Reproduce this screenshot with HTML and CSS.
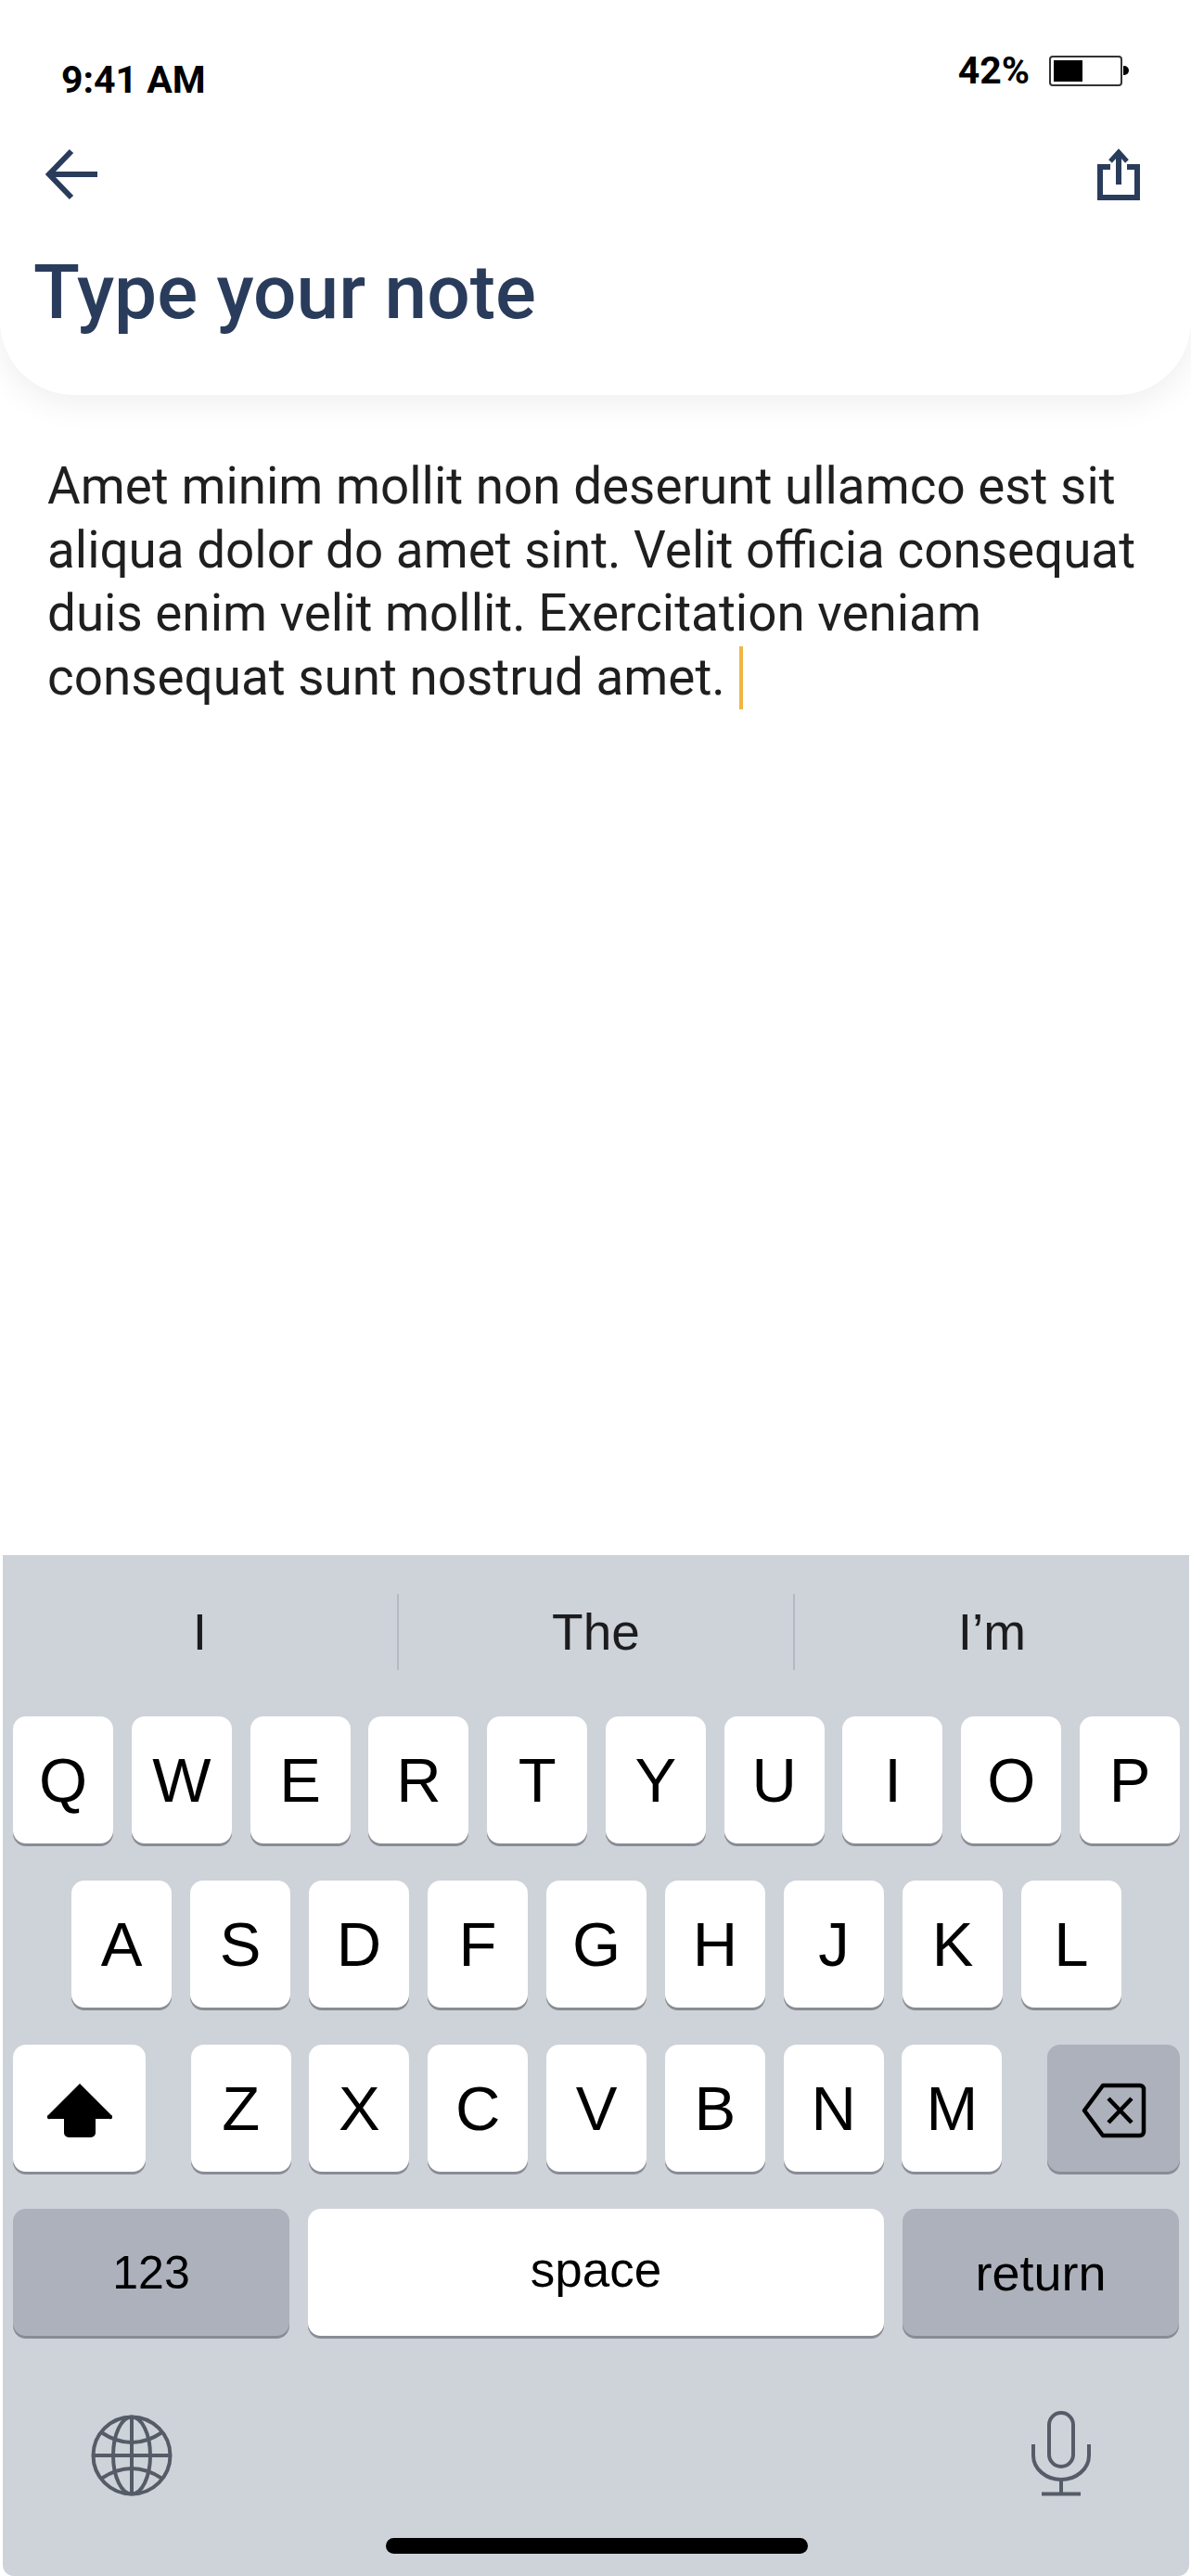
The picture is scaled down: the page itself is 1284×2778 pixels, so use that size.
FILE: index.html
```html
<!DOCTYPE html>
<html lang="en">
<head>
    <meta charset="UTF-8">
    <meta name="viewport" content="width=device-width, initial-scale=1.0">
    <title>Type your note</title>
    <link rel="stylesheet" href="styles.css">
</head>
<body>
    <div class="screen">
        <header class="top">
            <div class="status">
                <span class="time">9:41 AM</span>
                <div class="status-right">
                    <span class="percent">42%</span>
                    <div class="battery"><div class="battery-fill"></div></div>
                    <div class="battery-nub"></div>
                </div>
            </div>
            <div class="toolbar">
                <svg class="icon-back" width="58" height="56" viewBox="0 0 58 56" fill="none" stroke="#2a3c5c" stroke-width="6">
                    <path d="M56 28H5"/>
                    <path d="M28 3L4 28l24 25"/>
                </svg>
                <svg class="icon-share" width="46" height="56" viewBox="0 0 46 56" fill="none" stroke="#2a3c5c" stroke-width="6">
                    <path d="M14 20H3v33h40V20H32"/>
                    <path d="M23 39V4"/>
                    <path d="M14 14l9-10 9 10" stroke-width="5"/>
                </svg>
            </div>
            <h1 class="title">Type your note</h1>
        </header>

        <main class="note">
            <p>Amet minim mollit non deserunt ullamco est sit aliqua dolor do amet sint. Velit officia consequat duis enim velit mollit. Exercitation veniam consequat sunt nostrud amet. <span class="caret"></span></p>
        </main>

        <div class="keyboard">
            <div class="suggestions">
                <div class="suggestion">I</div>
                <div class="suggestion">The</div>
                <div class="suggestion">I’m</div>
            </div>

            <div class="key-row row-top">
                <div class="key">Q</div><div class="key">W</div><div class="key">E</div><div class="key">R</div><div class="key">T</div>
                <div class="key">Y</div><div class="key">U</div><div class="key">I</div><div class="key">O</div><div class="key">P</div>
            </div>
            <div class="key-row row-middle">
                <div class="key">A</div><div class="key">S</div><div class="key">D</div><div class="key">F</div><div class="key">G</div>
                <div class="key">H</div><div class="key">J</div><div class="key">K</div><div class="key">L</div>
            </div>
            <div class="key-row row-letters">
                <div class="key key-side key-icon">
                    <svg width="70" height="60" viewBox="0 0 70 60" fill="#000">
                        <path d="M35 1L69 35a2 2 0 0 1-2 4H52V54a5 5 0 0 1-5 5H23a5 5 0 0 1-5-5V39H3a2 2 0 0 1-2-4z"/>
                    </svg>
                </div>
                <div class="key-group">
                    <div class="key">Z</div><div class="key">X</div><div class="key">C</div><div class="key">V</div>
                    <div class="key">B</div><div class="key">N</div><div class="key">M</div>
                </div>
                <div class="key key-side key-dark key-icon">
                    <svg width="70" height="60" viewBox="0 0 70 60" fill="none" stroke="#000" stroke-width="4.5">
                        <path d="M23 3H63a4 4 0 0 1 4 4V53a4 4 0 0 1-4 4H23L3 30z" stroke-linejoin="round"/>
                        <path d="M29 17l25 26M54 17L29 43"/>
                    </svg>
                </div>
            </div>
            <div class="key-row">
                <div class="key key-wide key-dark">123</div>
                <div class="key key-space">space</div>
                <div class="key key-return key-dark">return</div>
            </div>

            <div class="kb-icons">
                <svg width="88" height="88" viewBox="0 0 88 88" fill="none" stroke="#565c67" stroke-width="4">
                    <circle cx="44" cy="44" r="41.500"/>
                    <ellipse cx="44" cy="44" rx="20" ry="41.500"/>
                    <path d="M44 2.500V85.500M2.500 44H85.500"/>
                    <path d="M11 19q33 22 66 0M11 69q33-22 66 0"/>
                </svg>
                <svg width="64" height="92" viewBox="0 0 64 92" fill="none" stroke="#565c67" stroke-width="4">
                    <rect x="19" y="2" width="26" height="58" rx="13"/>
                    <path d="M2 36V48a30 26 0 0 0 60 0V36"/>
                    <path d="M32 74V89M11 89.500H53"/>
                </svg>
            </div>
            <div class="home-bar"></div>
        </div>
    </div>
</body>
</html>
```
FILE: styles.css
```css
* {
    margin: 0;
    padding: 0;
    box-sizing: border-box;
}

body {
    font-family: Roboto, sans-serif;
    background: #fff;
}

.screen {
    width: 1284px;
    height: 2778px;
    display: flex;
    flex-direction: column;
    overflow: hidden;
}

/* top card */
.top {
    height: 426px;
    background: #fff;
    border-radius: 0 0 80px 80px;
    box-shadow: 0 8px 36px rgba(0, 0, 0, 0.07);
    padding: 0 55px 0 36px;
}

.status {
    height: 128px;
    display: flex;
    justify-content: space-between;
    align-items: flex-start;
    padding: 54px 12px 0 30px;
    color: #000;
    font-weight: 700;
    font-size: 41px;
}

.time {
    line-height: 44px;
    margin-top: 10px;
}

.status-right {
    display: flex;
    align-items: center;
}

.percent {
    line-height: 44px;
    margin-right: 21px;
}

.battery {
    width: 79px;
    height: 33px;
    border: 2px solid #333;
    border-radius: 4px;
    padding: 3px;
}

.battery-fill {
    width: 31px;
    height: 100%;
    background: #000;
}

.battery-nub {
    width: 6px;
    height: 10px;
    margin-left: 1px;
    background: #000;
    border-radius: 0 5px 5px 0;
}

.toolbar {
    height: 142px;
    display: flex;
    justify-content: space-between;
    padding-left: 13px;
    padding-top: 32px;
}

.title {
    font-size: 82px;
    font-weight: 500;
    line-height: 90px;
    color: #2a3c5c;
}

/* note text */
.note {
    flex: 1;
    padding: 64px 40px 0 51px;
    font-size: 54.8px;
    line-height: 68.5px;
    color: #1f1f1f;
}

.caret {
    display: inline-block;
    width: 4px;
    height: 68px;
    margin-left: 2px;
    background: #f2b544;
    vertical-align: -16px;
}

/* keyboard */
.keyboard {
    height: 1101px;
    width: 1279px;
    margin-left: 3px;
    background: #ced2d9;
    border-radius: 0 0 12px 12px;
    padding: 0 10px 0 11px;
    display: flex;
    flex-direction: column;
    font-family: "Liberation Sans", Arial, sans-serif;
    color: #000;
}

.suggestions {
    height: 174px;
    padding-top: 42px;
    display: flex;
    align-items: flex-start;
    margin: 0 -10px 0 -11px;
}

.suggestion {
    flex: 1;
    height: 82px;
    line-height: 82px;
    text-align: center;
    font-size: 55px;
    color: #1c1c1e;
    border-right: 2px solid #b6b9c2;
}

.suggestion:last-child {
    border-right: none;
}

.key-row {
    display: flex;
    gap: 20px;
    height: 140px;
    margin-bottom: 37px;
}

.row-top {
    gap: 19.8px;
}

.row-middle {
    padding-left: 63px;
}

.row-letters {
    justify-content: space-between;
}

.key-group {
    display: flex;
    gap: 19.8px;
}

.key {
    width: 108px;
    height: 137px;
    background: #fff;
    border-radius: 14px;
    box-shadow: 0 3px 0 #898c94;
    display: flex;
    align-items: center;
    justify-content: center;
    font-size: 67px;
}

.key-side {
    width: 143px;
}

.key-icon {
    padding-top: 4px;
}

.key-dark {
    background: #acb1bc;
}

.key-wide {
    width: 298px;
    font-size: 50px;
}

.key-space {
    width: 621px;
    font-size: 53px;
    padding-bottom: 6px;
}

.key-return {
    width: 298px;
    font-size: 54px;
}

.kb-icons {
    display: flex;
    justify-content: space-between;
    align-items: flex-end;
    height: 171px;
    margin-top: -38px;
    padding: 0 96px 0 84px;
}

.home-bar {
    width: 455px;
    height: 17px;
    margin: 45px auto 0;
    background: #000;
    border-radius: 9px;
}
```
